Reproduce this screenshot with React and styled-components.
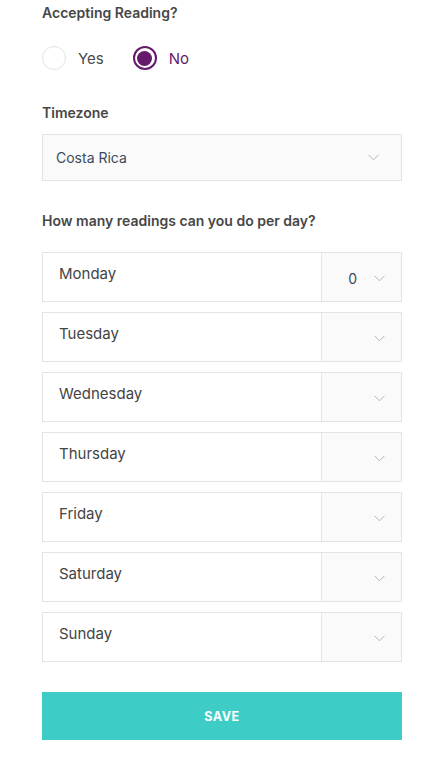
import React, { useState } from "react";
import styled, { createGlobalStyle } from "styled-components";

const Global = createGlobalStyle`
  body {
    margin: 0;
    background: #ffffff;
    font-family: Inter, "Helvetica Neue", Arial, sans-serif;
  }
`;

const Form = styled.div`
  padding: 4px 33px 0 42px;
  display: flex;
  flex-direction: column;
`;

const Label = styled.div`
  font-size: 14px;
  font-weight: 600;
  line-height: 18px;
  color: #474747;
  margin-top: ${(p) => p.$top || 0}px;
`;

const RadioGroup = styled.div`
  display: flex;
  align-items: center;
  margin-top: 24px;
`;

const RadioOption = styled.label`
  display: flex;
  align-items: center;
  gap: 12px;
  margin-right: 29px;
  font-size: 15px;
  color: ${(p) => (p.$checked ? "#651a6b" : "#4a4a4a")};
  cursor: pointer;
`;

const Circle = styled.span`
  width: 24px;
  height: 24px;
  box-sizing: border-box;
  border-radius: 50%;
  border: ${(p) => (p.$checked ? "2px solid #651a6b" : "1px solid #e2e2e2")};
  display: flex;
  align-items: center;
  justify-content: center;
  background: #fff;
  &::after {
    content: "";
    display: ${(p) => (p.$checked ? "block" : "none")};
    width: 15px;
    height: 15px;
    border-radius: 50%;
    background: #651a6b;
  }
`;

const Select = styled.div`
  margin-top: 12px;
  height: 47px;
  box-sizing: border-box;
  border: 1px solid #e4e4e4;
  background: #fafafa;
  display: flex;
  align-items: center;
  justify-content: space-between;
  padding: 0 22px 0 13px;
  font-size: 14px;
  color: #3b4a5c;
`;

const Rows = styled.div`
  display: flex;
  flex-direction: column;
  gap: 10px;
  margin-top: 22px;
`;

const Row = styled.div`
  display: flex;
  height: 50px;
  box-sizing: border-box;
  border: 1px solid #e4e4e4;
`;

const Day = styled.div`
  flex: 1;
  padding: 11px 0 0 16px;
  font-size: 15px;
  line-height: 20px;
  color: #444444;
`;

const Count = styled.div`
  width: 80px;
  border-left: 1px solid #e4e4e4;
  background: #fafafa;
  display: flex;
  align-items: center;
  justify-content: flex-end;
  gap: 17px;
  padding: 2px 16px 0 0;
  box-sizing: border-box;
  font-size: 14px;
  color: #3b4a5c;
`;

const SaveButton = styled.button`
  margin-top: 30px;
  height: 48px;
  border: none;
  background: #3ecdc6;
  color: #ffffff;
  font-family: inherit;
  font-size: 12.5px;
  font-weight: 700;
  letter-spacing: 0.5px;
  cursor: pointer;
`;

const Chevron = () => (
  <svg width="11" height="7" viewBox="0 0 11 7" fill="none">
    <path d="M0.5 0.8 L5.5 5.8 L10.5 0.8" stroke="#b5b5b5" strokeWidth="1" />
  </svg>
);

const days = [
  { name: "Monday", value: "0" },
  { name: "Tuesday", value: "" },
  { name: "Wednesday", value: "" },
  { name: "Thursday", value: "" },
  { name: "Friday", value: "" },
  { name: "Saturday", value: "" },
  { name: "Sunday", value: "" },
];

export default function App() {
  const [accepting, setAccepting] = useState("no");
  return (
    <Form>
      <Global />
      <Label>Accepting Reading?</Label>
      <RadioGroup>
        {["yes", "no"].map((opt) => (
          <RadioOption
            key={opt}
            $checked={accepting === opt}
            onClick={() => setAccepting(opt)}
          >
            <Circle $checked={accepting === opt} />
            {opt === "yes" ? "Yes" : "No"}
          </RadioOption>
        ))}
      </RadioGroup>
      <Label $top={34}>Timezone</Label>
      <Select>
        <span>Costa Rica</span>
        <Chevron />
      </Select>
      <Label $top={31}>How many readings can you do per day?</Label>
      <Rows>
        {days.map((d) => (
          <Row key={d.name}>
            <Day>{d.name}</Day>
            <Count>
              {d.value && <span>{d.value}</span>}
              <Chevron />
            </Count>
          </Row>
        ))}
      </Rows>
      <SaveButton>SAVE</SaveButton>
    </Form>
  );
}
